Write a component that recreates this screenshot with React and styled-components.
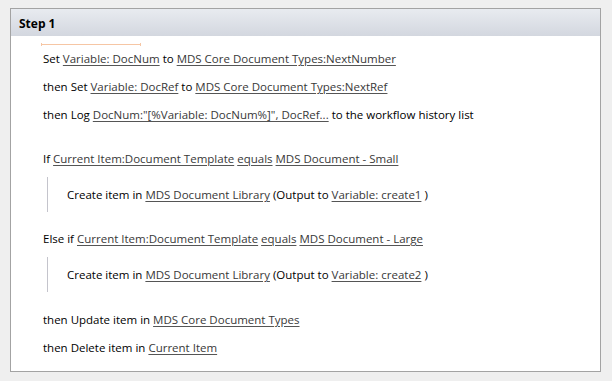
import React from 'react';
import styled, { createGlobalStyle } from 'styled-components';

const GlobalStyle = createGlobalStyle`
    body {
        margin: 0;
        background: #efefef;
        font-family: "Open Sans", "Noto Sans", sans-serif;
    }
`;

const Page = styled.div`
    width: 612px;
    height: 381px;
    padding: 8px 0 0 10px;
    box-sizing: border-box;
`;

const Panel = styled.div`
    width: 591px;
    height: 364px;
    box-sizing: border-box;
    border: 1px solid #a3a3a3;
    background: #fff;
`;

const Header = styled.div`
    height: 27px;
    display: flex;
    align-items: center;
    padding: 1px 0 0 8px;
    box-sizing: border-box;
    background: linear-gradient(#e8ebf0, #d3d7df);
    font-size: 12px;
    font-weight: 700;
    color: #000;
`;

const Body = styled.div`
    padding: 7px 0 0 32px;
`;

const Marker = styled.div`
    width: 98px;
    height: 3px;
    margin: 0 0 -1px -2px;
    border-left: 1px solid #f6c6a4;
    border-right: 1px solid #f6c6a4;
    background: linear-gradient(transparent 1px, #f6c6a4 1px, #f6c6a4 2px, transparent 2px);
`;

const Row = styled.div`
    height: 28px;
    line-height: 28px;
    white-space: pre;
    font-size: 11.5px;
    color: #000;
    margin-top: ${p => p.$gap || 0}px;
`;

const Link = styled.span`
    color: #383838;
    text-decoration: underline;
    text-underline-offset: 2px;
    text-decoration-color: #555;
`;

const Nested = styled.div`
    margin: ${p => p.$gap}px 0 0 4px;
    padding: 4px 0 3px 19px;
    border-left: 1px solid #c4c4cc;
`;

export default function App() {
    return (
        <Page>
            <GlobalStyle />
            <Panel>
                <Header>Step 1</Header>
                <Body>
                    <Marker />
                    <Row>Set <Link>Variable: DocNum</Link> to <Link>MDS Core Document Types:NextNumber</Link></Row>
                    <Row>then Set <Link>Variable: DocRef</Link> to <Link>MDS Core Document Types:NextRef</Link></Row>
                    <Row>then Log <Link>DocNum:"[%Variable: DocNum%]", DocRef...</Link> to the workflow history list</Row>
                    <Row $gap={16}>If <Link>Current Item:Document Template</Link> <Link>equals</Link> <Link>MDS Document - Small</Link></Row>
                    <Nested $gap={4}>
                        <Row>Create item in <Link>MDS Document Library</Link> (Output to <Link>Variable: create1</Link> )</Row>
                    </Nested>
                    <Row $gap={13}>Else if <Link>Current Item:Document Template</Link> <Link>equals</Link> <Link>MDS Document - Large</Link></Row>
                    <Nested $gap={4}>
                        <Row>Create item in <Link>MDS Document Library</Link> (Output to <Link>Variable: create2</Link> )</Row>
                    </Nested>
                    <Row $gap={14}>then Update item in <Link>MDS Core Document Types</Link></Row>
                    <Row>then Delete item in <Link>Current Item</Link></Row>
                </Body>
            </Panel>
        </Page>
    );
}
